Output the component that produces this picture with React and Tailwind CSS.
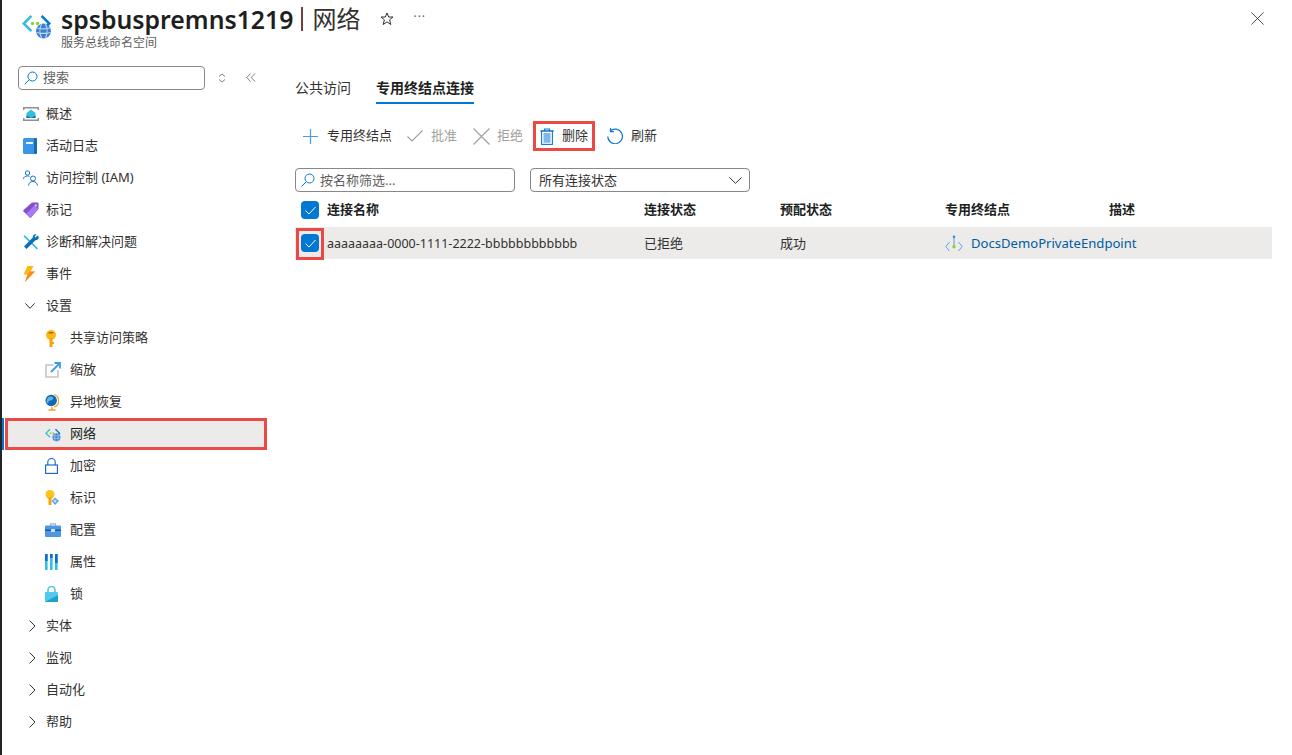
import React from 'react';

const font = "font-['Noto_Sans','Noto_Sans_CJK_SC',sans-serif]";

const NetworkIcon = ({ size = 30 }) => (
  <svg width={size} height={size} viewBox="0 0 30 30">
    <path d="M8.500 5 0 13.500l8.500 8.500 1.800-1.800-6.700-6.700 6.700-6.700z" fill="#32bedd" />
    <path d="M20.500 5 29 13.500l-3 3-1.800-1.800 1.200-1.200-6.700-6.700z" fill="#0078d4" />
    <circle cx="10.500" cy="13.500" r="1.700" fill="#86d633" />
    <circle cx="15.500" cy="13.500" r="1.700" fill="#86d633" />
    <circle cx="21.500" cy="21" r="7.500" fill="#3c7fd0" />
    <path d="M15 18c4 1 9 1 13 0M14.500 22.500c4 1 10 1 14 0M19.500 14c-2 4-2 10 0 14M23.500 14c2 4 2 10 0 14" stroke="#bcd9f5" strokeWidth="1.200" fill="none" />
  </svg>
);

const SearchGlass = () => (
  <svg width="14" height="14" viewBox="0 0 14 14" fill="none" stroke="#0078d4" strokeWidth="1">
    <circle cx="8.500" cy="5.500" r="4.500" />
    <path d="M5.300 8.700.7 13.300" />
  </svg>
);
const ChevDown = ({ w = 10, h = 6, color = '#323130' }) => (
  <svg width={w} height={h} viewBox={`0 0 ${w} ${h}`} fill="none" stroke={color} strokeWidth="1">
    <path d={`M.4.4 ${w / 2} ${h - 0.7} ${w - 0.4}.4`} />
  </svg>
);
const ChevRight = () => (
  <svg width="7" height="12" viewBox="0 0 7 12" fill="none" stroke="#323130" strokeWidth="1">
    <path d="M.5.500 6 6 .5 11.500" />
  </svg>
);
const Overview = () => (
  <svg width="16" height="14" viewBox="0 0 16 14">
    <path d="M0 0h16v1.500H0zM0 12.500h16V14H0zM0 0h1.500v3H0zM14.500 0H16v3h-1.500zM0 11h1.500v3H0zM14.500 11H16v3h-1.500z" fill="#8f8f8f" />
    <path d="M8 2.500 12.500 6v5h-9V6z" fill="#32bedd" />
    <path d="M3.500 8.500 8 11l4.500-2.500V11h-9z" fill="#0a6fb8" />
  </svg>
);
const Book = () => (
  <svg width="14" height="16" viewBox="0 0 14 16">
    <rect width="13" height="16" rx="1.500" fill="#3a96e6" />
    <rect x="11" width="3" height="16" rx="1" fill="#1b6ab5" />
    <rect x="3" y="4" width="7" height="2" fill="#eaf4fd" />
  </svg>
);
const People = () => (
  <svg width="16" height="16" viewBox="0 0 16 16" fill="none" stroke="#1a6fdc" strokeWidth="1">
    <circle cx="4.500" cy="3" r="2.200" />
    <path d="M.5 9c.3-2.200 1.800-3 4-3 .8 0 1.500.1 2 .4" />
    <circle cx="10" cy="8.500" r="2.500" />
    <path d="M5.500 15.500c.4-2.700 2-4 4.500-4s4.100 1.300 4.500 4" />
  </svg>
);
const Tag = () => (
  <svg width="16" height="16" viewBox="0 0 16 16">
    <path d="M9 .5h5.500a1 1 0 0 1 1 1V7L8 15.500a1 1 0 0 1-1.400 0L.6 9.400a1 1 0 0 1 0-1.400z" fill="#804fc9" />
    <path d="M3.500 11.500 12 3l3.500 4L8 15.500a1 1 0 0 1-1.400 0z" fill="#a67af4" />
    <circle cx="12.800" cy="3.200" r="1" fill="#e6dcf8" />
  </svg>
);
const Tools = () => (
  <svg width="16" height="16" viewBox="0 0 16 16">
    <path d="M1.500 1 8 7.500 15 14.200 13.800 15.500 7 8.800.5 2.500z" fill="#32bedd" />
    <path d="M14.500 1.500 12.500 3.500l-1-1L13.500.5C11.500-.3 9.500 1.200 9.800 3.600L1 12.500 3.500 15 12.400 6.200c2.400.3 3.900-2 3.100-4z" fill="#0a6fb8" />
  </svg>
);
const Bolt = () => (
  <svg width="12" height="16" viewBox="0 0 12 16">
    <path d="M4.500 0h6L7.500 5.500H12L2 16l2.500-7.500H.5z" fill="#fdb813" />
    <path d="M7.500 5.500H12L2 16l2.500-7.500z" fill="#f78d1e" />
  </svg>
);
const KeyIcon = () => (
  <svg width="12" height="17" viewBox="0 0 12 17">
    <circle cx="6" cy="5" r="5" fill="#fcb714" />
    <rect x="4.500" y="8" width="3" height="9" fill="#f5a20a" />
    <rect x="7" y="12" width="2" height="2" fill="#f5a20a" />
    <rect x="3.500" y="2" width="5" height="1.500" rx=".7" fill="#a86b00" />
  </svg>
);
const Scale = () => (
  <svg width="16" height="16" viewBox="0 0 16 16" fill="none">
    <path d="M8.500 3H1v12h12V8" stroke="#c4c4c4" strokeWidth="1.600" />
    <path d="M6 10 14 2M9.500 1H15v5.500" stroke="#3c9be8" strokeWidth="1.800" />
  </svg>
);
const Globe = () => (
  <svg width="14" height="17" viewBox="0 0 14 17">
    <path d="M9 .5a6.500 6.500 0 0 1 0 12.500" stroke="#f0a030" strokeWidth="1.200" fill="none" />
    <path d="M7 13v2.500M3.500 16h7" stroke="#f0a030" strokeWidth="1.500" />
    <circle cx="6.200" cy="6.500" r="5.700" fill="#1267b5" />
    <path d="M3 3.500c2-1.500 4-1 5 0s-1 3-3 3-1 3-2.500 3S1.500 5 3 3.500z" fill="#5fb2ea" />
  </svg>
);
const Lock = () => (
  <svg width="13" height="16" viewBox="0 0 13 16" fill="none" stroke="#0f5fd0" strokeWidth="1.100">
    <rect x=".6" y="7" width="11.800" height="8.400" />
    <path d="M2.800 7V4.200a3.700 3.700 0 0 1 7.400 0V7" />
  </svg>
);
const Identity = () => (
  <svg width="14" height="16" viewBox="0 0 14 16">
    <circle cx="5" cy="4.500" r="4.500" fill="#fcc419" />
    <rect x="3.500" y="7" width="3" height="8" fill="#f0a80e" />
    <path d="M10 7.500 14 11l-4 4-3.500-4z" fill="#5ea0ef" />
    <path d="M10 9.500 11.800 11 10 13 8.300 11z" fill="#cfe4fa" />
  </svg>
);
const Briefcase = () => (
  <svg width="16" height="14" viewBox="0 0 16 14">
    <path d="M5.500 3V1h5v2" stroke="#b8b8b8" strokeWidth="1.300" fill="none" />
    <rect y="2.500" width="16" height="11.500" rx="1" fill="#4d97e4" />
    <rect y="6.500" width="16" height="1.500" fill="#0f5ea8" />
    <rect x="6" y="6" width="4" height="3" fill="#c9e2fa" />
  </svg>
);
const Bars = () => (
  <svg width="13" height="16" viewBox="0 0 13 16">
    <rect width="2.600" height="16" fill="#32bedd" />
    <rect x="5" width="2.600" height="16" fill="#32bedd" />
    <rect x="10" width="2.600" height="16" fill="#32bedd" />
    <rect width="2.600" height="7" fill="#0f6cc9" />
    <rect x="5" width="2.600" height="4" fill="#0f6cc9" />
    <rect x="10" width="2.600" height="9" fill="#0f6cc9" />
  </svg>
);
const FilledLock = () => (
  <svg width="13" height="16" viewBox="0 0 13 16">
    <path d="M3 7V4a3.500 3.500 0 0 1 7 0v3" stroke="#50c8ef" strokeWidth="1.600" fill="none" />
    <rect y="6" width="13" height="10" rx="1" fill="#50c8ef" />
    <path d="M0 16 13 9v6a1 1 0 0 1-1 1z" fill="#1ba4c9" />
  </svg>
);
const PlusIcon = () => (
  <svg width="15" height="15" viewBox="0 0 15 15" stroke="#4a9ce0" strokeWidth="1.200">
    <path d="M7.500 0v15M0 7.500h15" />
  </svg>
);
const CheckIcon = () => (
  <svg width="16" height="12" viewBox="0 0 16 12" fill="none" stroke="#a19f9d" strokeWidth="1.100">
    <path d="M.5 6.500 5 11 15.500.5" />
  </svg>
);
const CrossIcon = ({ size = 17, color = '#a19f9d' }) => (
  <svg width={size} height={size} viewBox="0 0 17 17" fill="none" stroke={color} strokeWidth="1.100">
    <path d="M.5.500l16 16M16.500.500l-16 16" />
  </svg>
);
const Trash = () => (
  <svg width="14" height="17" viewBox="0 0 14 17" fill="none">
    <path d="M0 3h14M4.500 3V1h5v2" stroke="#0f78d4" strokeWidth="1.200" />
    <rect x="1.600" y="3" width="10.800" height="13.400" stroke="#0f78d4" strokeWidth="1.100" />
    <rect x="3.500" y="5" width="7" height="9.800" fill="#7fb8e8" />
  </svg>
);
const Refresh = () => (
  <svg width="16" height="16" viewBox="0 0 16 16" fill="none" stroke="#0f78d4" strokeWidth="1.200">
    <path d="M3 3.200A7.300 7.300 0 1 1 .8 8.500" />
    <path d="M3.500 0v3.700H7" />
  </svg>
);
const StarIcon = () => (
  <svg width="14" height="14" viewBox="0 0 14 14" fill="none" stroke="#323130" strokeWidth="1">
    <path d="M7 1l1.700 4h4.300l-3.400 2.800 1.200 4.700L7 9.900l-3.800 2.600 1.200-4.700L1 5h4.300z" />
  </svg>
);
const Endpoint = () => (
  <svg width="18" height="18" viewBox="0 0 18 18" fill="none" className="shrink-0">
    <path d="M4.500 7 .8 11.500l3.700 4.500" stroke="#5ea0ef" strokeWidth="1" />
    <path d="M13.500 7l3.700 4.500-3.700 4.500" stroke="#5ea0ef" strokeWidth="1" />
    <path d="M9 2v10" stroke="#5e9ac4" strokeWidth="1" />
    <circle cx="9" cy="1.800" r="1.300" fill="#1b93eb" />
    <circle cx="9" cy="11.800" r="1.700" fill="#86d633" />
  </svg>
);

const Box = ({ className = '' }) => (
  <span className={`flex w-[18px] h-[18px] items-center justify-center rounded-sm bg-[#0078d4] ${className}`}>
    <svg width="11" height="9" viewBox="0 0 11 9" fill="none" stroke="#fff" strokeWidth="1">
      <path d="M.5 4.500 4 8 10.500 1" />
    </svg>
  </span>
);

const NavRow = ({ icon, label, sub, active }) => (
  <div className={`h-8 flex items-center text-[13px] text-[#323130] ${active ? 'bg-[#edebe9] outline-[3px] -outline-offset-[3px] outline-[#ea4a45] ml-[3px] w-[262px] pl-[39px]' : sub ? 'pl-[42px]' : 'pl-[20px]'}`}>
    <span className={`${sub ? 'w-[26px]' : 'w-6'} flex items-center shrink-0 pl-[1px]`}>{icon}</span>
    <span className={active ? 'text-[#201f1e]' : ''}>{label}</span>
  </div>
);

const GroupRow = ({ open, label }) => (
  <div className="h-8 flex items-center pl-[20px] text-[13px] text-[#323130]">
    <span className="w-6 shrink-0 flex items-center">
      {open ? <span className="pl-[3px]"><ChevDown /></span> : <span className="pl-[7px]"><ChevRight /></span>}
    </span>
    {label}
  </div>
);

const ToolBtn = ({ icon, label, disabled, gap = 'gap-[8px]', className = '' }) => (
  <div className={`h-[30px] flex items-center text-[13px] ${gap} ${disabled ? 'text-[#a19f9d]' : 'text-[#323130]'} ${className}`}>
    {icon}
    <span>{label}</span>
  </div>
);

export default function App() {
  return (
    <div className={`w-[1292px] h-[755px] overflow-hidden bg-white border-l-2 border-[#252423] flex flex-col ${font}`}>
      <header className="h-[58px] shrink-0 flex pl-[20px] pr-[28px]">
        <div className="pt-[10px] pr-[9px]"><NetworkIcon /></div>
        <div className="pt-[2px]">
          <div className="flex items-center h-[34px]">
            <span className="text-[24.800px] leading-8 font-semibold text-[#201f1e]">spsbuspremns1219</span>
            <span className="w-[2px] h-[24px] bg-[#7a3b3b] ml-[8px] mr-[9px]" />
            <span className="text-[24px] leading-8 text-[#323130]">网络</span>
            <span className="ml-[20px]"><StarIcon /></span>
            <span className="ml-[19px] text-[12px] leading-none text-[#605e5c] tracking-[1px] -mt-[4px]">···</span>
          </div>
          <div className="text-[12px] leading-[14px] text-[#605e5c]">服务总线命名空间</div>
        </div>
        <span className="ml-auto mt-[12px] h-[14px]"><CrossIcon size={13} color="#323130" /></span>
      </header>

      <div className="flex flex-1 min-h-0">
        <aside className="w-[268px] shrink-0">
          <div className="h-[40px] pl-[16px] pt-[8px] flex items-start">
            <div className="w-[187px] h-[24px] border border-[#8a8886] rounded-sm flex items-center pl-[5px] gap-[5px] text-[13px] text-[#605e5c]">
              <SearchGlass />
              搜索
            </div>
            <svg width="8" height="10" viewBox="0 0 8 10" className="ml-[13px] mt-[7px]" fill="none" stroke="#605e5c" strokeWidth=".8">
              <path d="M1 3.500 4 1l3 2.500M1 6.500 4 9l3-2.500" />
            </svg>
            <svg width="10" height="9" viewBox="0 0 10 9" className="ml-[20px] mt-[7px]" fill="none" stroke="#605e5c" strokeWidth=".8">
              <path d="M4.500.5.800 4.500l3.700 4M9 .5 5.300 4.500l3.700 4" />
            </svg>
          </div>
          <NavRow icon={<Overview />} label="概述" />
          <NavRow icon={<Book />} label="活动日志" />
          <NavRow icon={<People />} label="访问控制 (IAM)" />
          <NavRow icon={<Tag />} label="标记" />
          <NavRow icon={<Tools />} label="诊断和解决问题" />
          <NavRow icon={<Bolt />} label="事件" />
          <GroupRow open label="设置" />
          <NavRow sub icon={<KeyIcon />} label="共享访问策略" />
          <NavRow sub icon={<Scale />} label="缩放" />
          <NavRow sub icon={<Globe />} label="异地恢复" />
          <div className="relative">
            <span className="absolute left-0 top-0 w-[2px] h-8 bg-[#0078d4]" />
            <NavRow sub active icon={<NetworkIcon size={16} />} label="网络" />
          </div>
          <NavRow sub icon={<Lock />} label="加密" />
          <NavRow sub icon={<Identity />} label="标识" />
          <NavRow sub icon={<Briefcase />} label="配置" />
          <NavRow sub icon={<Bars />} label="属性" />
          <NavRow sub icon={<FilledLock />} label="锁" />
          <GroupRow label="实体" />
          <GroupRow label="监视" />
          <GroupRow label="自动化" />
          <GroupRow label="帮助" />
        </aside>

        <main className="flex-1 pl-[25px] pr-[20px]">
          <div className="flex gap-[25px] text-[14px] pt-[19px] h-[46px]">
            <span className="text-[#323130] h-[27px]">公共访问</span>
            <span className="font-semibold text-[#201f1e] h-[27px] border-b-2 border-[#0078d4] whitespace-nowrap">专用终结点连接</span>
          </div>
          <div className="flex items-center h-[30px] mt-[17px] pl-[8px]">
            <ToolBtn icon={<PlusIcon />} gap="gap-[9px]" label="专用终结点" className="mr-[15px]" />
            <ToolBtn disabled icon={<CheckIcon />} gap="gap-[8px]" label="批准" className="mr-[16px]" />
            <ToolBtn disabled icon={<CrossIcon />} gap="gap-[7px]" label="拒绝" className="mr-[10px]" />
            <ToolBtn icon={<Trash />} label="删除" className="border-[3px] border-[#ea4a45] pl-[4px] pr-[4px] mr-[12px]" />
            <ToolBtn icon={<Refresh />} label="刷新" />
          </div>
          <div className="flex gap-[15px] mt-[17px]">
            <div className="w-[220px] h-[24px] border border-[#8a8886] rounded-sm flex items-center pl-[5px] gap-[5px] text-[13px] text-[#605e5c]">
              <SearchGlass />
              <span className="pt-[2px]">按名称筛选...</span>
            </div>
            <div className="w-[220px] h-[24px] border border-[#8a8886] rounded-sm flex items-center justify-between pl-[8px] pr-[7px] text-[13px] text-[#323130]">
              <span className="pt-[2px]">所有连接状态</span>
              <ChevDown w={13} h={7} />
            </div>
          </div>
          <div className="grid grid-cols-[32px_317px_136px_165px_164px_1fr] items-center h-[34px] text-[13px] font-semibold text-[#201f1e] mt-[1px]">
            <Box className="ml-[6px]" />
            <span>连接名称</span>
            <span>连接状态</span>
            <span>预配状态</span>
            <span>专用终结点</span>
            <span>描述</span>
          </div>
          <div className="grid grid-cols-[32px_317px_136px_165px_164px_1fr] items-center h-[32px] text-[13px] text-[#323130] bg-[#edebe9]">
            <span className="relative h-[32px] flex items-center">
              <Box className="ml-[6px]" />
              <span className="absolute left-[1px] top-[1px] w-[28px] h-[32px] border-[3px] border-[#ea4a45]" />
            </span>
            <span className="text-[12.500px] pt-[2px]">aaaaaaaa-0000-1111-2222-bbbbbbbbbbbb</span>
            <span className="pt-[2px]">已拒绝</span>
            <span className="pt-[2px]">成功</span>
            <span className="flex items-center gap-[8px] whitespace-nowrap text-[13.100px] text-[#005b9f] pt-[2px]">
              <Endpoint />
              DocsDemoPrivateEndpoint
            </span>
            <span />
          </div>
        </main>
      </div>
    </div>
  );
}
